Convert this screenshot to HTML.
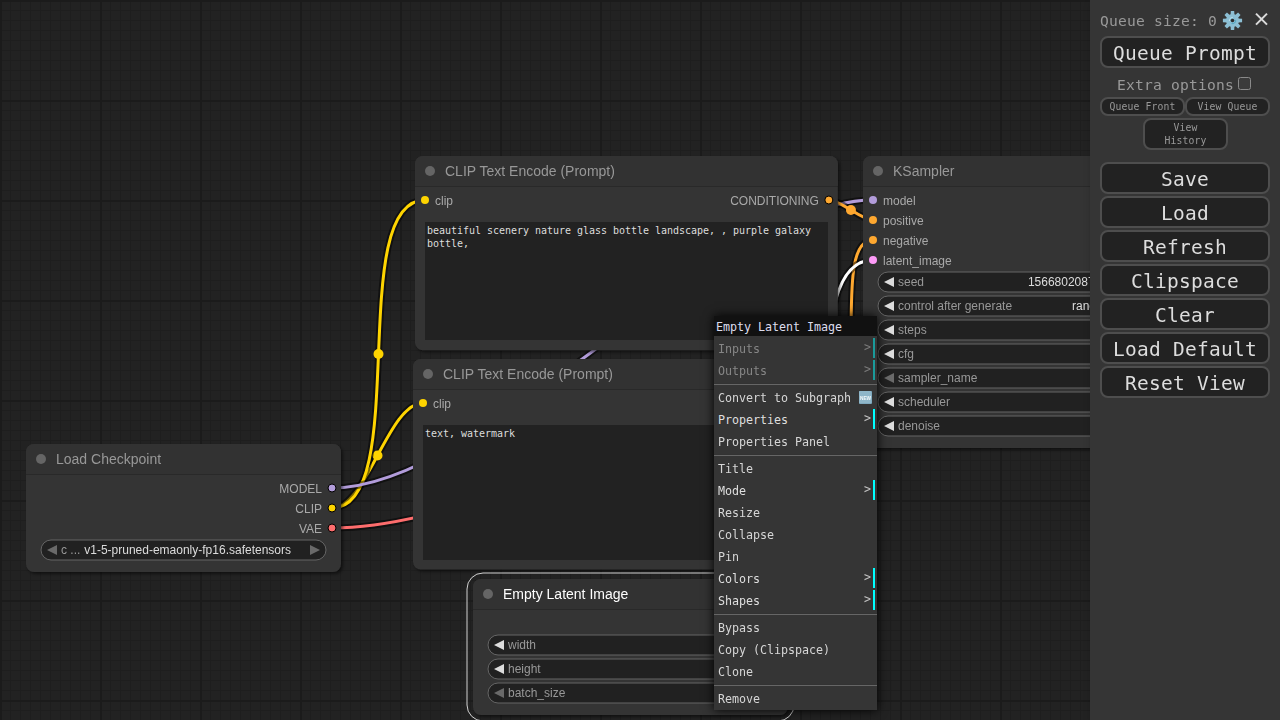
<!DOCTYPE html>
<html><head><meta charset="utf-8"><title>ComfyUI</title>
<style>
html,body{margin:0;padding:0;}
body{width:1280px;height:720px;overflow:hidden;position:relative;background-color:#222;
background-image:
 linear-gradient(to right,#1b1b1b 0,#1b1b1b 2px,transparent 2px),
 linear-gradient(to bottom,#1b1b1b 0,#1b1b1b 2px,transparent 2px),
 linear-gradient(to right,#1e1e1e 0,#1e1e1e 1px,transparent 1px),
 linear-gradient(to bottom,#1e1e1e 0,#1e1e1e 1px,transparent 1px);
background-size:100px 100px,100px 100px,10px 10px,10px 10px;
font-family:"Liberation Sans",sans-serif;}
#cv{position:absolute;left:0;top:0;}
#cv text{font-family:"Liberation Sans",sans-serif;}
.ta{position:absolute;box-sizing:border-box;background:#222;color:#ddd;font:10px/13px "DejaVu Sans Mono",monospace;letter-spacing:-0.02px;padding:2px;white-space:pre-wrap;overflow:hidden;}
#menu{position:absolute;left:714px;top:316px;width:163px;background:#353535;box-shadow:0 0 10px #000;font:11.7px/16px "DejaVu Sans Mono","Liberation Mono",monospace;color:#d6d6d6;display:flow-root;letter-spacing:-0.04px;}
.mt{background:#111;color:#dde;padding:3px 2px 1px 2px;height:16px;}
.me{margin:2px;padding:3px 20px 1px 2px;height:16px;position:relative;white-space:pre;}
.me.sub{background:#353535;color:#dfdfdf;border-right:2px solid #00ffff;}
.me.sub::after{content:">";position:absolute;right:2px;top:1px;color:#c4c4c4;}
.me.dis{background:#353535;color:#868686;border-right-color:#1a9a9a}
.me.dis::after{color:#7b7b7b}
.ms{height:0;border-top:1px solid #333;border-bottom:1px solid #666;margin:3px 0 2px 0;}
.me+.ms{margin-top:3px}
.nw{position:absolute;left:143px;top:4px;}
#side{position:absolute;left:1090px;top:0;width:190px;height:720px;background:#353535;color:#999;font-family:"DejaVu Sans Mono","Liberation Mono",monospace;box-shadow:3px 3px 8px rgba(0,0,0,.4);}
.btn{position:absolute;box-sizing:border-box;border:2px solid #4e4e4e;border-radius:8px;background:#222;color:#ddd;text-align:center;font-size:19.5px;letter-spacing:.26px;}
.big{left:10px;width:170px;height:32px;line-height:27px;padding-top:2px;}
.sm{font-size:9.75px;letter-spacing:.13px;color:#999;line-height:13px;}
</style></head><body>
<svg id="cv" width="1280" height="720" viewBox="0 0 1280 720">
<defs><filter id="sh" x="-5%" y="-5%" width="110%" height="115%"><feDropShadow dx="2" dy="2" stdDeviation="1.5" flood-color="#000" flood-opacity="0.5"/></filter></defs>
<g opacity="0.999">
<path d="M332.00 508.00C366.74 508.00 388.26 403.00 423.00 403.00" fill="none" stroke="rgba(0,0,0,0.5)" stroke-width="7" stroke-linejoin="round"/>
<path d="M332.00 508.00C366.74 508.00 388.26 403.00 423.00 403.00" fill="none" stroke="#FFD500" stroke-width="3"/>
<circle cx="377.50" cy="455.50" r="5" fill="#FFD500"/>
<path d="M332.00 508.00C412.43 508.00 344.57 200.00 425.00 200.00" fill="none" stroke="rgba(0,0,0,0.5)" stroke-width="7" stroke-linejoin="round"/>
<path d="M332.00 508.00C412.43 508.00 344.57 200.00 425.00 200.00" fill="none" stroke="#FFD500" stroke-width="3"/>
<circle cx="378.50" cy="354.00" r="5" fill="#FFD500"/>
<path d="M332.00 488.00C485.22 488.00 719.78 200.00 873.00 200.00" fill="none" stroke="rgba(0,0,0,0.5)" stroke-width="7" stroke-linejoin="round"/>
<path d="M332.00 488.00C485.22 488.00 719.78 200.00 873.00 200.00" fill="none" stroke="#B39DDB" stroke-width="3"/>
<circle cx="602.50" cy="344.00" r="5" fill="#B39DDB"/>
<path d="M828.85 200.00C840.96 200.00 860.88 220.00 873.00 220.00" fill="none" stroke="rgba(0,0,0,0.5)" stroke-width="7" stroke-linejoin="round"/>
<path d="M828.85 200.00C840.96 200.00 860.88 220.00 873.00 220.00" fill="none" stroke="#FFA931" stroke-width="3"/>
<circle cx="850.92" cy="210.00" r="5" fill="#FFA931"/>
<path d="M829.28 403.00C871.47 403.00 830.81 240.00 873.00 240.00" fill="none" stroke="rgba(0,0,0,0.5)" stroke-width="7" stroke-linejoin="round"/>
<path d="M829.28 403.00C871.47 403.00 830.81 240.00 873.00 240.00" fill="none" stroke="#FFA931" stroke-width="3"/>
<circle cx="851.14" cy="321.50" r="5" fill="#FFA931"/>
<path d="M779.00 623.00C872.74 623.00 779.26 260.00 873.00 260.00" fill="none" stroke="rgba(0,0,0,0.5)" stroke-width="7" stroke-linejoin="round"/>
<path d="M779.00 623.00C872.74 623.00 779.26 260.00 873.00 260.00" fill="none" stroke="#FFFFFF" stroke-width="3"/>
<circle cx="826.00" cy="441.50" r="5" fill="#FFFFFF"/>
<path d="M332.00 528.00C566.57 528.00 984.43 222.00 1219.00 222.00" fill="none" stroke="rgba(0,0,0,0.5)" stroke-width="7" stroke-linejoin="round"/>
<path d="M332.00 528.00C566.57 528.00 984.43 222.00 1219.00 222.00" fill="none" stroke="#FF6E6E" stroke-width="3"/>
<circle cx="775.50" cy="375.00" r="5" fill="#FF6E6E"/>
<g filter="url(#sh)"><path d="M421 359H830.278A8 8 0 0 1 838.278 367V561.606A8 8 0 0 1 830.278 569.606H421A8 8 0 0 1 413 561.606V367A8 8 0 0 1 421 359Z" fill="#353535"/></g>
<path d="M421 359H830.278A8 8 0 0 1 838.278 367V389H413V367A8 8 0 0 1 421 359Z" fill="#333"/>
<rect x="413" y="389" width="425.278" height="1" fill="rgba(0,0,0,0.2)"/>
<circle cx="428" cy="374" r="5" fill="#666"/>
<text x="443" y="379" font-size="14" fill="#999">CLIP Text Encode (Prompt)</text>
<circle cx="423" cy="403.0" r="4" fill="#FFD500"/>
<text x="433" y="408.0" font-size="12" fill="#aaa">clip</text>
<circle cx="829.28" cy="403.0" r="4" fill="#FFA931" stroke="#000" stroke-width="1"/>
<text x="819.28" y="408.0" font-size="12" fill="#aaa" text-anchor="end">CONDITIONING</text>
<g filter="url(#sh)"><path d="M423 156H829.845A8 8 0 0 1 837.845 164V342.313A8 8 0 0 1 829.845 350.313H423A8 8 0 0 1 415 342.313V164A8 8 0 0 1 423 156Z" fill="#353535"/></g>
<path d="M423 156H829.845A8 8 0 0 1 837.845 164V186H415V164A8 8 0 0 1 423 156Z" fill="#333"/>
<rect x="415" y="186" width="422.845" height="1" fill="rgba(0,0,0,0.2)"/>
<circle cx="430" cy="171" r="5" fill="#666"/>
<text x="445" y="176" font-size="14" fill="#999">CLIP Text Encode (Prompt)</text>
<circle cx="425" cy="200.0" r="4" fill="#FFD500"/>
<text x="435" y="205.0" font-size="12" fill="#aaa">clip</text>
<circle cx="828.85" cy="200.0" r="4" fill="#FFA931" stroke="#000" stroke-width="1"/>
<text x="818.85" y="205.0" font-size="12" fill="#aaa" text-anchor="end">CONDITIONING</text>
<g filter="url(#sh)"><path d="M481 579H780A8 8 0 0 1 788 587V707A8 8 0 0 1 780 715H481A8 8 0 0 1 473 707V587A8 8 0 0 1 481 579Z" fill="#353535"/></g>
<path d="M481 579H780A8 8 0 0 1 788 587V609H473V587A8 8 0 0 1 481 579Z" fill="#333"/>
<rect x="473" y="609" width="315" height="1" fill="rgba(0,0,0,0.2)"/>
<circle cx="488" cy="594" r="5" fill="#666"/>
<text x="503" y="599" font-size="14" fill="#fff">Empty Latent Image</text>
<path d="M483 573H778A16 16 0 0 1 794 589V705A16 16 0 0 1 778 721H483A16 16 0 0 1 467 705V589A16 16 0 0 1 483 573Z" fill="none" stroke="#fff" stroke-opacity="0.8" stroke-width="1"/>
<circle cx="779.00" cy="623.0" r="4" fill="#FF9CF9" stroke="#000" stroke-width="1"/>
<text x="769.00" y="628.0" font-size="12" fill="#aaa" text-anchor="end">LATENT</text>
<rect x="488" y="635" width="285" height="20" rx="10" fill="#222" stroke="#666" stroke-width="1"/>
<path d="M504 640L494 645L504 650Z" fill="#ddd"/>
<path d="M757 640L767 645L757 650Z" fill="#ddd"/>
<text x="508" y="649" font-size="12" fill="#999">width</text>
<text x="738" y="649" font-size="12" fill="#ddd" text-anchor="end">512</text>
<rect x="488" y="659" width="285" height="20" rx="10" fill="#222" stroke="#666" stroke-width="1"/>
<path d="M504 664L494 669L504 674Z" fill="#ddd"/>
<path d="M757 664L767 669L757 674Z" fill="#ddd"/>
<text x="508" y="673" font-size="12" fill="#999">height</text>
<text x="738" y="673" font-size="12" fill="#ddd" text-anchor="end">512</text>
<rect x="488" y="683" width="285" height="20" rx="10" fill="#222" stroke="#666" stroke-width="1"/>
<path d="M504 688L494 693L504 698Z" fill="#6b6b6b"/>
<path d="M757 688L767 693L757 698Z" fill="#ddd"/>
<text x="508" y="697" font-size="12" fill="#999">batch_size</text>
<text x="738" y="697" font-size="12" fill="#ddd" text-anchor="end">1</text>
<g filter="url(#sh)"><path d="M871 156H1170A8 8 0 0 1 1178 164V440A8 8 0 0 1 1170 448H871A8 8 0 0 1 863 440V164A8 8 0 0 1 871 156Z" fill="#353535"/></g>
<path d="M871 156H1170A8 8 0 0 1 1178 164V186H863V164A8 8 0 0 1 871 156Z" fill="#333"/>
<rect x="863" y="186" width="315" height="1" fill="rgba(0,0,0,0.2)"/>
<circle cx="878" cy="171" r="5" fill="#666"/>
<text x="893" y="176" font-size="14" fill="#999">KSampler</text>
<circle cx="873" cy="200.0" r="4" fill="#B39DDB"/>
<text x="883" y="205.0" font-size="12" fill="#aaa">model</text>
<circle cx="873" cy="220.0" r="4" fill="#FFA931"/>
<text x="883" y="225.0" font-size="12" fill="#aaa">positive</text>
<circle cx="873" cy="240.0" r="4" fill="#FFA931"/>
<text x="883" y="245.0" font-size="12" fill="#aaa">negative</text>
<circle cx="873" cy="260.0" r="4" fill="#FF9CF9"/>
<text x="883" y="265.0" font-size="12" fill="#aaa">latent_image</text>
<circle cx="1169.00" cy="200.0" r="4" fill="#FF9CF9" stroke="#000" stroke-width="1"/>
<text x="1159.00" y="205.0" font-size="12" fill="#aaa" text-anchor="end">LATENT</text>
<rect x="878" y="272" width="285" height="20" rx="10" fill="#222" stroke="#666" stroke-width="1"/>
<path d="M894 277L884 282L894 287Z" fill="#ddd"/>
<path d="M1147 277L1157 282L1147 287Z" fill="#ddd"/>
<text x="898" y="286" font-size="12" fill="#999">seed</text>
<text x="1128" y="286" font-size="12" fill="#ddd" text-anchor="end">156680208700286</text>
<rect x="878" y="296" width="285" height="20" rx="10" fill="#222" stroke="#666" stroke-width="1"/>
<path d="M894 301L884 306L894 311Z" fill="#ddd"/>
<path d="M1147 301L1157 306L1147 311Z" fill="#ddd"/>
<text x="898" y="310" font-size="12" fill="#999">control after generate</text>
<text x="1128" y="310" font-size="12" fill="#ddd" text-anchor="end">randomize</text>
<rect x="878" y="320" width="285" height="20" rx="10" fill="#222" stroke="#666" stroke-width="1"/>
<path d="M894 325L884 330L894 335Z" fill="#ddd"/>
<path d="M1147 325L1157 330L1147 335Z" fill="#ddd"/>
<text x="898" y="334" font-size="12" fill="#999">steps</text>
<text x="1128" y="334" font-size="12" fill="#ddd" text-anchor="end">20</text>
<rect x="878" y="344" width="285" height="20" rx="10" fill="#222" stroke="#666" stroke-width="1"/>
<path d="M894 349L884 354L894 359Z" fill="#ddd"/>
<path d="M1147 349L1157 354L1147 359Z" fill="#ddd"/>
<text x="898" y="358" font-size="12" fill="#999">cfg</text>
<text x="1128" y="358" font-size="12" fill="#ddd" text-anchor="end">8.0</text>
<rect x="878" y="368" width="285" height="20" rx="10" fill="#222" stroke="#666" stroke-width="1"/>
<path d="M894 373L884 378L894 383Z" fill="#6b6b6b"/>
<path d="M1147 373L1157 378L1147 383Z" fill="#ddd"/>
<text x="898" y="382" font-size="12" fill="#999">sampler_name</text>
<text x="1128" y="382" font-size="12" fill="#ddd" text-anchor="end">euler</text>
<rect x="878" y="392" width="285" height="20" rx="10" fill="#222" stroke="#666" stroke-width="1"/>
<path d="M894 397L884 402L894 407Z" fill="#ddd"/>
<path d="M1147 397L1157 402L1147 407Z" fill="#ddd"/>
<text x="898" y="406" font-size="12" fill="#999">scheduler</text>
<text x="1128" y="406" font-size="12" fill="#ddd" text-anchor="end">normal</text>
<rect x="878" y="416" width="285" height="20" rx="10" fill="#222" stroke="#666" stroke-width="1"/>
<path d="M894 421L884 426L894 431Z" fill="#ddd"/>
<path d="M1147 421L1157 426L1147 431Z" fill="#6b6b6b"/>
<text x="898" y="430" font-size="12" fill="#999">denoise</text>
<text x="1128" y="430" font-size="12" fill="#ddd" text-anchor="end">1.00</text>
<g filter="url(#sh)"><path d="M34 444H333A8 8 0 0 1 341 452V564A8 8 0 0 1 333 572H34A8 8 0 0 1 26 564V452A8 8 0 0 1 34 444Z" fill="#353535"/></g>
<path d="M34 444H333A8 8 0 0 1 341 452V474H26V452A8 8 0 0 1 34 444Z" fill="#333"/>
<rect x="26" y="474" width="315" height="1" fill="rgba(0,0,0,0.2)"/>
<circle cx="41" cy="459" r="5" fill="#666"/>
<text x="56" y="464" font-size="14" fill="#999">Load Checkpoint</text>
<circle cx="332.00" cy="488.0" r="4" fill="#B39DDB" stroke="#000" stroke-width="1"/>
<text x="322.00" y="493.0" font-size="12" fill="#aaa" text-anchor="end">MODEL</text>
<circle cx="332.00" cy="508.0" r="4" fill="#FFD500" stroke="#000" stroke-width="1"/>
<text x="322.00" y="513.0" font-size="12" fill="#aaa" text-anchor="end">CLIP</text>
<circle cx="332.00" cy="528.0" r="4" fill="#FF6E6E" stroke="#000" stroke-width="1"/>
<text x="322.00" y="533.0" font-size="12" fill="#aaa" text-anchor="end">VAE</text>
<rect x="41" y="540" width="285" height="20" rx="10" fill="#222" stroke="#666" stroke-width="1"/>
<path d="M57 545L47 550L57 555Z" fill="#6b6b6b"/>
<path d="M310 545L320 550L310 555Z" fill="#6b6b6b"/>
<text x="61" y="554" font-size="12" fill="#999">c ...</text>
<text x="291" y="554" font-size="12" fill="#ddd" text-anchor="end">v1-5-pruned-emaonly-fp16.safetensors</text>
</g>
</svg>
<div class="ta" style="left:425px;top:222px;width:403px;height:118px">beautiful scenery nature glass bottle landscape, , purple galaxy bottle,</div>
<div class="ta" style="left:423px;top:425px;width:405px;height:135px">text, watermark</div>
<div id="menu">
<div class="mt">Empty Latent Image</div>
<div class="me dis sub">Inputs</div>
<div class="me dis sub">Outputs</div>
<div class="ms"></div>
<div class="me">Convert to Subgraph <svg class="nw" width="13" height="13" viewBox="0 0 13 13"><rect width="13" height="13" rx="1" fill="#6f9db3"/><rect width="12.5" height="12.5" rx="1" fill="#8fb6c9"/><text x="1" y="8.8" font-size="5.6" font-weight="bold" textLength="11" lengthAdjust="spacingAndGlyphs" fill="#f4f8fa" font-family="Liberation Sans, sans-serif">NEW</text></svg></div>
<div class="me sub">Properties</div>
<div class="me ">Properties Panel</div>
<div class="ms"></div>
<div class="me ">Title</div>
<div class="me sub">Mode</div>
<div class="me ">Resize</div>
<div class="me ">Collapse</div>
<div class="me ">Pin</div>
<div class="me sub">Colors</div>
<div class="me sub">Shapes</div>
<div class="ms"></div>
<div class="me ">Bypass</div>
<div class="me ">Copy (Clipspace)</div>
<div class="me ">Clone</div>
<div class="ms"></div>
<div class="me ">Remove</div>
</div>
<div id="side">
<div style="position:absolute;left:10px;top:10px;font-size:14.6px;letter-spacing:.21px;line-height:22px;white-space:pre">Queue size: 0</div>
<svg style="position:absolute;left:131.9px;top:9.8px" width="21" height="21" viewBox="-10.5 -10.5 21 21"><g fill="#8cbfd4">
<circle r="6.5"/>
<g id="t"><path d="M-1.7 -9.6H1.7L2 -5H-2Z"/><path d="M-1.7 9.6H1.7L2 5H-2Z"/></g>
<use href="#t" transform="rotate(45)"/><use href="#t" transform="rotate(90)"/><use href="#t" transform="rotate(135)"/></g>
<circle r="3.3" fill="#83bbd2"/>
<path d="M-3.1 0.6A3.2 3.2 0 0 1 0.4 -3.15" fill="none" stroke="#c4e4ee" stroke-width="0.9"/>
<path d="M3.2 -0.4A3.2 3.2 0 0 1 -0.9 3.1" fill="none" stroke="#4aa3bb" stroke-width="0.9"/>
<circle r="1.8" fill="#2b2b2b"/></svg>
<svg style="position:absolute;left:164px;top:12px" width="15" height="15" viewBox="0 0 15 15"><path d="M2 1.6L13 12.6M13 1.6L2 12.6" stroke="#dadada" stroke-width="2.05" fill="none"/></svg>
<div class="btn big" style="top:36px">Queue Prompt</div>
<div style="position:absolute;left:27px;top:74px;font-size:14.6px;letter-spacing:.21px;line-height:22px;white-space:pre">Extra options</div>
<div style="position:absolute;left:148px;top:77px;width:13px;height:13px;box-sizing:border-box;border:1px solid #8a8a8a;border-radius:2.5px;background:#3b3b3b"></div>
<div class="btn sm" style="left:10px;top:97px;width:85px;height:19px;line-height:14px;padding-top:1px">Queue Front</div>
<div class="btn sm" style="left:95px;top:97px;width:85px;height:19px;line-height:14px;padding-top:1px">View Queue</div>
<div class="btn sm" style="left:53px;top:118px;width:85px;height:32px;padding-top:1px">View<br>History</div>
<div class="btn big" style="top:162px">Save</div>
<div class="btn big" style="top:196px">Load</div>
<div class="btn big" style="top:230px">Refresh</div>
<div class="btn big" style="top:264px">Clipspace</div>
<div class="btn big" style="top:298px">Clear</div>
<div class="btn big" style="top:332px">Load Default</div>
<div class="btn big" style="top:366px">Reset View</div>
</div>
</body></html>
